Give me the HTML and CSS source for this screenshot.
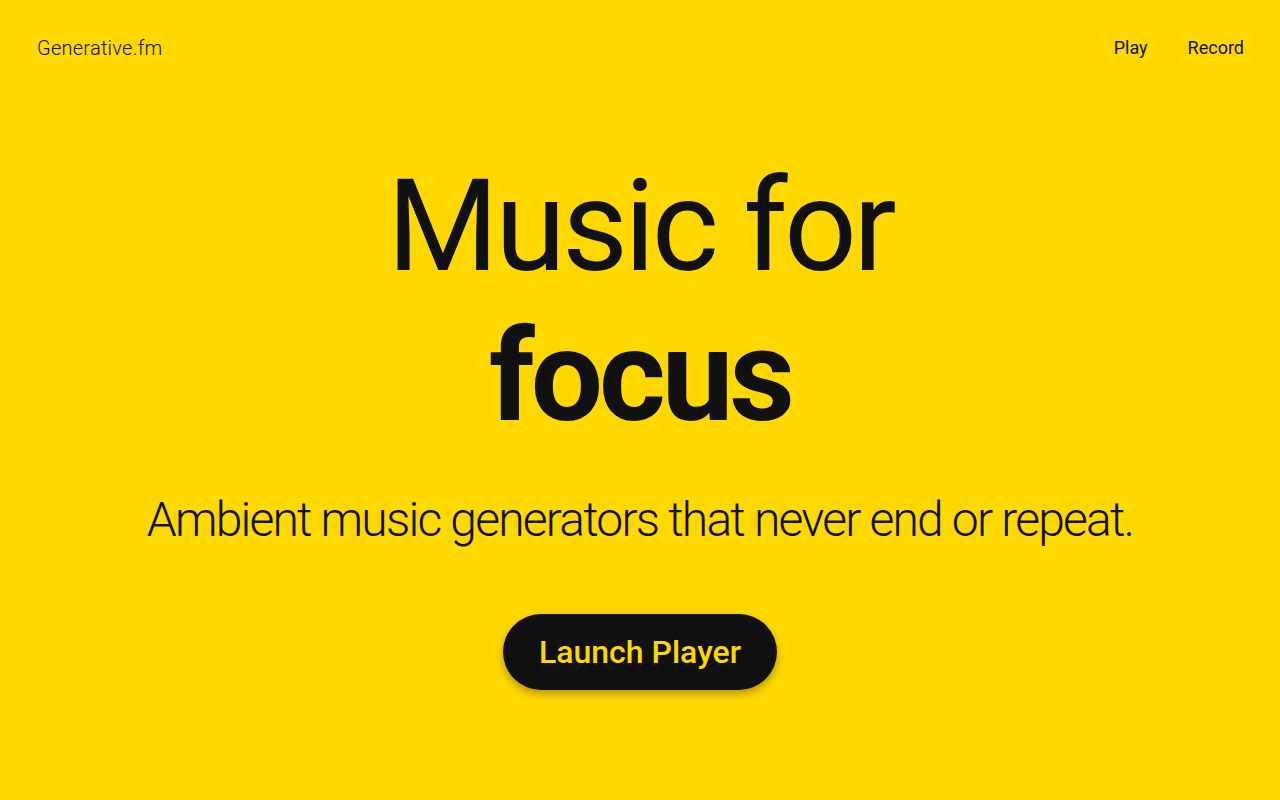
FILE: index.html
```html
<!DOCTYPE html>
<html lang="en">
<head>
<meta charset="utf-8">
<title>Generative.fm</title>
<link rel="stylesheet" href="styles.css">
</head>
<body>
<header class="header">
  <a class="logo" href="#">Generative.fm</a>
  <nav class="nav">
    <a class="nav-link" href="#">Play</a>
    <a class="nav-link" href="#">Record</a>
  </nav>
</header>
<main class="hero">
  <h1 class="title">
    <span class="title-light">Music for</span>
    <span class="title-bold">focus</span>
  </h1>
  <p class="subtitle">Ambient music generators that never end or repeat.</p>
  <a class="launch" href="#">Launch Player</a>
</main>
</body>
</html>
```

FILE: styles.css
```css
html, body {
  margin: 0;
  padding: 0;
}
body {
  background: #ffd800;
  color: #111111;
  font-family: Roboto, "Liberation Sans", sans-serif;
  width: 1280px;
  height: 800px;
  overflow: hidden;
}
a {
  color: inherit;
  text-decoration: none;
}
.header {
  display: flex;
  justify-content: space-between;
  align-items: center;
  padding: 35px 36px 0 37px;
  height: 24px;
}
.logo {
  font-size: 20px;
  font-weight: 300;
  letter-spacing: 0.25px;
  position: relative;
  top: 1px;
}
.nav {
  display: flex;
  gap: 40px;
}
.nav-link {
  font-size: 18px;
  font-weight: 400;
}
.hero {
  display: flex;
  flex-direction: column;
  align-items: center;
  text-align: center;
}
.title {
  margin: 92px 0 0;
  font-size: 128px;
  line-height: 150px;
  display: flex;
  flex-direction: column;
  align-items: center;
}
.title-light {
  font-weight: 400;
  letter-spacing: -3.7px;
}
.title-bold {
  font-weight: 700;
  letter-spacing: -4px;
}
.subtitle {
  margin: 41px 0 0;
  font-size: 48px;
  font-weight: 300;
  line-height: 56px;
  letter-spacing: -1.8px;
}
.launch {
  margin-top: 66px;
  background: #111111;
  color: #ffd800;
  font-size: 32px;
  font-weight: 500;
  line-height: 76px;
  height: 76px;
  padding: 0 36px;
  border-radius: 38px;
  box-shadow: 0 4px 8px rgba(0, 0, 0, 0.3);
}
```
